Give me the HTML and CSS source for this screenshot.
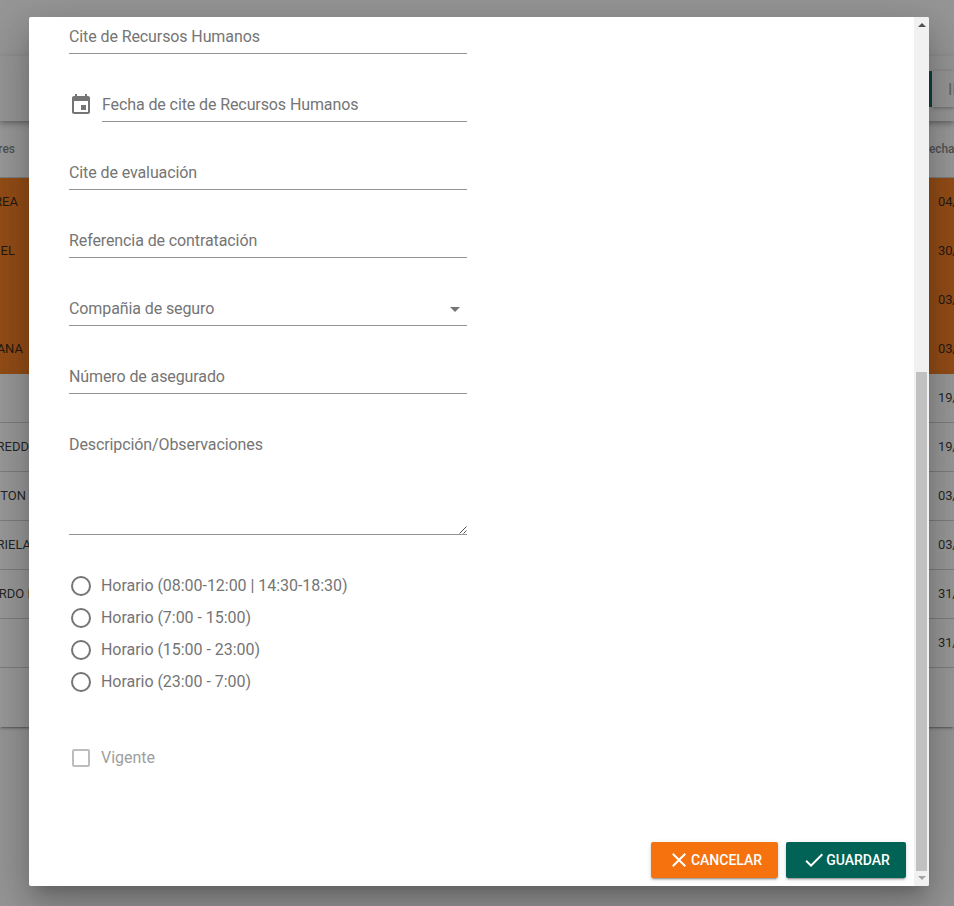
FILE: index.html
```html
<!DOCTYPE html>
<html lang="es">
<head>
<meta charset="utf-8">
<title>Contrato</title>
<link rel="stylesheet" href="styles.css">
</head>
<body>
<div class="page">
  <div class="toolbar"><div class="tool-green"></div><div class="tool-search">II</div></div>
  <div class="table">
    <div class="row head"><span class="c1 e15">res</span><span class="c2">echa</span></div>
    <div class="row hot"><span class="c1 e18">REA</span><span class="c2">04/</span></div>
    <div class="row hot"><span class="c1 e15">EL</span><span class="c2">30/</span></div>
    <div class="row hot"><span class="c1"></span><span class="c2">03/</span></div>
    <div class="row hot"><span class="c1 e23">ANA</span><span class="c2">03/</span></div>
    <div class="row"><span class="c1"></span><span class="c2">19/</span></div>
    <div class="row"><span class="c1 e29">REDD</span><span class="c2">19/</span></div>
    <div class="row"><span class="c1 e26">TON</span><span class="c2">03/</span></div>
    <div class="row"><span class="c1 e30">RIELA</span><span class="c2">03/</span></div>
    <div class="row"><span class="c1 e31">RDO I</span><span class="c2">31/</span></div>
    <div class="row"><span class="c1"></span><span class="c2">31/</span></div>
    <div class="foot"></div>
  </div>
</div>
<div class="overlay">
  <div class="dialog">
    <div class="content">
      <form class="form">
        <div class="field"><div class="line">Cite de Recursos Humanos</div></div>
        <div class="field">
          <svg class="cal" viewBox="0 0 24 24"><path d="M17 12h-5v5h5v-5zM16 1v2H8V1H6v2H5c-1.11 0-1.99.9-1.99 2L3 19c0 1.1.89 2 2 2h14c1.1 0 2-.9 2-2V5c0-1.1-.9-2-2-2h-1V1h-2zm3 18H5V8h14v11z"/></svg>
          <div class="line">Fecha de cite de Recursos Humanos</div>
        </div>
        <div class="field"><div class="line">Cite de evaluación</div></div>
        <div class="field"><div class="line">Referencia de contratación</div></div>
        <div class="field"><div class="line select">Compañia de seguro<svg viewBox="0 0 24 24"><path d="M7 10l5 5 5-5z"/></svg></div></div>
        <div class="field"><div class="line">Número de asegurado</div></div>
        <div class="field area"><div class="line">Descripción/Observaciones<svg class="grip" viewBox="0 0 8 8"><path d="M0.5 7.5L7.5 0.5M4.5 7.5L7.5 4.5"/></svg></div></div>
        <div class="radios">
          <div class="option"><svg viewBox="0 0 24 24"><circle cx="12" cy="12" r="9"/></svg><span>Horario (08:00-12:00 | 14:30-18:30)</span></div>
          <div class="option"><svg viewBox="0 0 24 24"><circle cx="12" cy="12" r="9"/></svg><span>Horario (7:00 - 15:00)</span></div>
          <div class="option"><svg viewBox="0 0 24 24"><circle cx="12" cy="12" r="9"/></svg><span>Horario (15:00 - 23:00)</span></div>
          <div class="option"><svg viewBox="0 0 24 24"><circle cx="12" cy="12" r="9"/></svg><span>Horario (23:00 - 7:00)</span></div>
        </div>
        <div class="option disabled"><svg viewBox="0 0 24 24"><rect x="4" y="4" width="16" height="16" rx="1"/></svg><span>Vigente</span></div>
      </form>
      <div class="actions">
        <div class="btn cancel"><svg viewBox="0 0 24 24"><path d="M19 6.41L17.59 5 12 10.59 6.41 5 5 6.41 10.59 12 5 17.59 6.41 19 12 13.41 17.59 19 19 17.59 13.41 12z"/></svg>CANCELAR</div>
        <div class="btn save"><svg viewBox="0 0 24 24"><path d="M9 16.17L4.83 12l-1.42 1.41L9 19 21 7l-1.41-1.41z"/></svg>GUARDAR</div>
      </div>
    </div>
    <div class="scrollbar"><div class="up"></div><div class="thumb"></div><div class="down"></div></div>
  </div>
</div>
</body>
</html>
```
FILE: styles.css
```css
* { box-sizing: border-box; }
body { margin: 0; width: 954px; height: 906px; overflow: hidden; background: #fafafa; font-family: Roboto, sans-serif; }
.page { padding-top: 56px; height: 906px; overflow: hidden; }
.toolbar { height: 65px; background: #fafafa; display: flex; justify-content: flex-end; padding-top: 15px; position: relative; box-shadow: 0 2px 4px -1px rgba(0,0,0,.2), 0 4px 5px rgba(0,0,0,.14), 0 1px 10px rgba(0,0,0,.12); }
.tool-green { width: 80px; height: 36px; background: #00695c; }
.tool-search { width: 22px; height: 36px; padding-left: 16px; overflow: hidden; font-size: 16px; line-height: 38px; color: #999; box-shadow: 0 1px 4px rgba(0,0,0,.35); }
.table { background: #fff; box-shadow: 0 3px 1px -2px rgba(0,0,0,.2), 0 2px 2px rgba(0,0,0,.14), 0 1px 5px rgba(0,0,0,.12); }
.row { height: 49px; display: flex; justify-content: space-between; align-items: center; padding-bottom: 2px; border-bottom: 1px solid #ccc; font-size: 13px; color: rgba(0,0,0,.87); white-space: nowrap; overflow: hidden; }
.head { height: 57px; padding-bottom: 0; font-size: 12px; font-weight: 500; color: rgba(0,0,0,.54); }
.hot { background: #f5740f; border-color: #f5740f; }
.c1 { display: flex; justify-content: flex-end; width: 29px; flex: none; }
.c2 { width: 16px; flex: none; letter-spacing: -.15px; }
.head .c2 { width: 25px; }
.e15 { width: 15px; }
.e18 { width: 18px; }
.e23 { width: 23px; }
.e26 { width: 26px; }
.e29 { width: 29px; }
.e30 { width: 31px; }
.e31 { width: 31px; }
.foot { height: 59px; }
.overlay { position: absolute; inset: 0; background: rgba(33,33,33,.46); padding: 17px 25px 20px 29px; }
.dialog { height: 869px; display: flex; background: #fff; border-radius: 2px; overflow: hidden; box-shadow: 0 11px 15px -7px rgba(0,0,0,.2), 0 24px 38px 3px rgba(0,0,0,.14), 0 9px 46px 8px rgba(0,0,0,.12); }
.content { flex: 1; display: flex; flex-direction: column; justify-content: space-between; padding: 4px 8px 8px 40px; }
.form { width: 398px; font-size: 16px; color: #757575; }
.field { display: flex; height: 33px; margin-bottom: 35px; letter-spacing: -.1px; }
.line { flex: 1; display: flex; justify-content: space-between; border-bottom: 1px solid #949494; line-height: 32px; }
.cal { width: 24px; height: 24px; margin: 4px 9px 0 0; fill: #757575; }
.select svg { width: 24px; height: 24px; margin-top: 4px; fill: #757575; }
.area { height: 106px; margin-bottom: 35px; }
.grip { width: 8px; height: 8px; align-self: flex-end; fill: none; stroke: #555; stroke-width: 1; }
.option { height: 32px; display: flex; align-items: center; gap: 8px; letter-spacing: -.04px; }
.option span { padding-bottom: 2px; }
.option svg { width: 24px; height: 24px; fill: none; stroke: #757575; stroke-width: 2; }
.radios { margin-bottom: 44px; }
.disabled { color: #9e9e9e; }
.disabled svg { stroke: #bdbdbd; }
.actions { display: flex; justify-content: flex-end; gap: 8px; }
.btn { height: 36px; display: flex; align-items: center; justify-content: center; border-radius: 2px; font-size: 14px; font-weight: 500; color: #fff; box-shadow: 0 3px 1px -2px rgba(0,0,0,.2), 0 2px 2px rgba(0,0,0,.14), 0 1px 5px rgba(0,0,0,.12); }
.btn svg { width: 24px; height: 24px; fill: #fff; }
.cancel { width: 127px; background: #f5720f; }
.save { width: 120px; background: #006355; }
.scrollbar { width: 15px; background: #f1f1f1; display: flex; flex-direction: column; align-items: center; padding: 6px 0; }
.up { border: 4px solid transparent; border-top: 0; border-bottom: 4px solid #505050; }
.thumb { width: 11px; height: 499px; margin-top: 345px; background: #c1c1c1; }
.down { margin-top: 5px; border: 4px solid transparent; border-bottom: 0; border-top: 4px solid #a3a3a3; }
```
